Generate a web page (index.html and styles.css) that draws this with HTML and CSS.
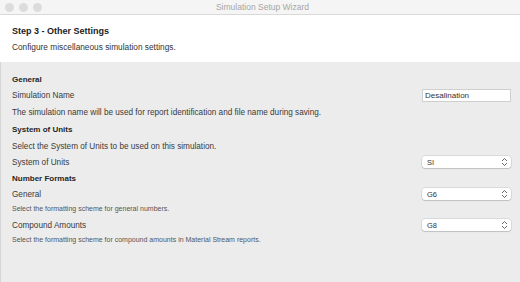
FILE: index.html
```html
<!DOCTYPE html>
<html lang="en">
<head>
    <meta charset="UTF-8">
    <title>Simulation Setup Wizard</title>
    <link rel="stylesheet" href="styles.css">
</head>
<body>
    <div class="window">
        <div class="titlebar">
            <div class="lights">
                <span></span>
                <span></span>
                <span></span>
            </div>
            <div class="title">Simulation Setup Wizard</div>
        </div>

        <div class="header">
            <h1>Step 3 - Other Settings</h1>
            <p>Configure miscellaneous simulation settings.</p>
        </div>

        <div class="content">
            <!-- General -->
            <h2 class="section-title">General</h2>
            <div class="field-row">
                <label for="sim-name">Simulation Name</label>
                <input type="text" id="sim-name" class="text-input" value="Desalination">
            </div>
            <p class="field-help">The simulation name will be used for report identification and file name during saving.</p>

            <!-- System of Units -->
            <h2 class="section-title">System of Units</h2>
            <p class="field-help">Select the System of Units to be used on this simulation.</p>
            <div class="field-row">
                <label>System of Units</label>
                <div class="select">SI<svg width="7" height="10" viewBox="0 0 7 10"><path d="M1 4 L3.5 1.5 L6 4 M1 6 L3.5 8.5 L6 6" fill="none" stroke="#555" stroke-width="0.9"/></svg></div>
            </div>

            <!-- Number Formats -->
            <h2 class="section-title">Number Formats</h2>
            <div class="field-row">
                <label>General</label>
                <div class="select">G6<svg width="7" height="10" viewBox="0 0 7 10"><path d="M1 4 L3.5 1.5 L6 4 M1 6 L3.5 8.5 L6 6" fill="none" stroke="#555" stroke-width="0.9"/></svg></div>
            </div>
            <p class="field-note">Select the formatting scheme for general numbers.</p>
            <div class="field-row row-spaced">
                <label>Compound Amounts</label>
                <div class="select">G8<svg width="7" height="10" viewBox="0 0 7 10"><path d="M1 4 L3.5 1.5 L6 4 M1 6 L3.5 8.5 L6 6" fill="none" stroke="#555" stroke-width="0.9"/></svg></div>
            </div>
            <p class="field-note">Select the formatting scheme for compound amounts in Material Stream reports.</p>
        </div>
    </div>
</body>
</html>
```

FILE: styles.css
```css
* {
    margin: 0;
    padding: 0;
    box-sizing: border-box;
}

body {
    width: 520px;
    height: 282px;
    overflow: hidden;
    font-family: "Liberation Sans", Arial, sans-serif;
    background-color: #ececec;
    color: #333;
}

.window {
    display: flex;
    flex-direction: column;
    height: 282px;
}

.titlebar {
    height: 15px;
    background-color: #f5f5f5;
    border-bottom: 1px solid #d9d9d9;
    display: flex;
    align-items: center;
}

.lights {
    display: flex;
    gap: 5px;
    padding-left: 5px;
}

.lights span {
    display: block;
    width: 9px;
    height: 9px;
    border-radius: 50%;
    background-color: #dcdcdc;
}

.title {
    flex: 1;
    text-align: center;
    font-size: 8.5px;
    color: #a6a6a6;
    margin-right: 37px;
}

.header {
    background-color: #fff;
    height: 47px;
    padding: 10px 12px 0;
}

.header h1 {
    font-size: 9px;
    font-weight: bold;
    color: #222;
    line-height: 12px;
}

.header p {
    font-size: 8.3px;
    color: #333;
    line-height: 12px;
    margin-top: 4px;
}

.content {
    flex: 1;
    padding: 11px 9px 0 11px;
    border-left: 1px solid #d6d6d6;
}

.section-title {
    font-size: 8px;
    font-weight: bold;
    color: #262626;
    height: 14px;
    line-height: 14px;
    margin-top: 3px;
}

.section-title:first-child {
    margin-top: 0;
}

.field-row {
    display: flex;
    justify-content: space-between;
    align-items: center;
    height: 14px;
    margin-top: 1px;
    font-size: 8.2px;
    color: #3a3a3a;
}

.row-spaced {
    margin-top: 3px;
}

.field-help {
    font-size: 8.2px;
    color: #3a3a3a;
    height: 14px;
    line-height: 14px;
    margin-top: 3px;
}

.field-row + .field-help {
    margin-top: 4px;
}

.field-note {
    font-size: 7px;
    color: #555;
    height: 12px;
    line-height: 12px;
    margin-top: 2px;
}

.text-input {
    width: 89px;
    height: 13px;
    border: 1px solid #cfcfcf;
    background-color: #fff;
    font-family: inherit;
    font-size: 8px;
    color: #333;
    padding: 0 2px;
    outline: none;
}

.select {
    width: 89px;
    height: 12px;
    background-color: #fff;
    border-radius: 3px;
    box-shadow: 0 0 0 0.5px rgba(0, 0, 0, 0.15), 0 1px 1px rgba(0, 0, 0, 0.12);
    display: flex;
    justify-content: space-between;
    align-items: center;
    padding: 0 3px 0 5px;
    font-size: 7.5px;
    color: #333;
}
```
